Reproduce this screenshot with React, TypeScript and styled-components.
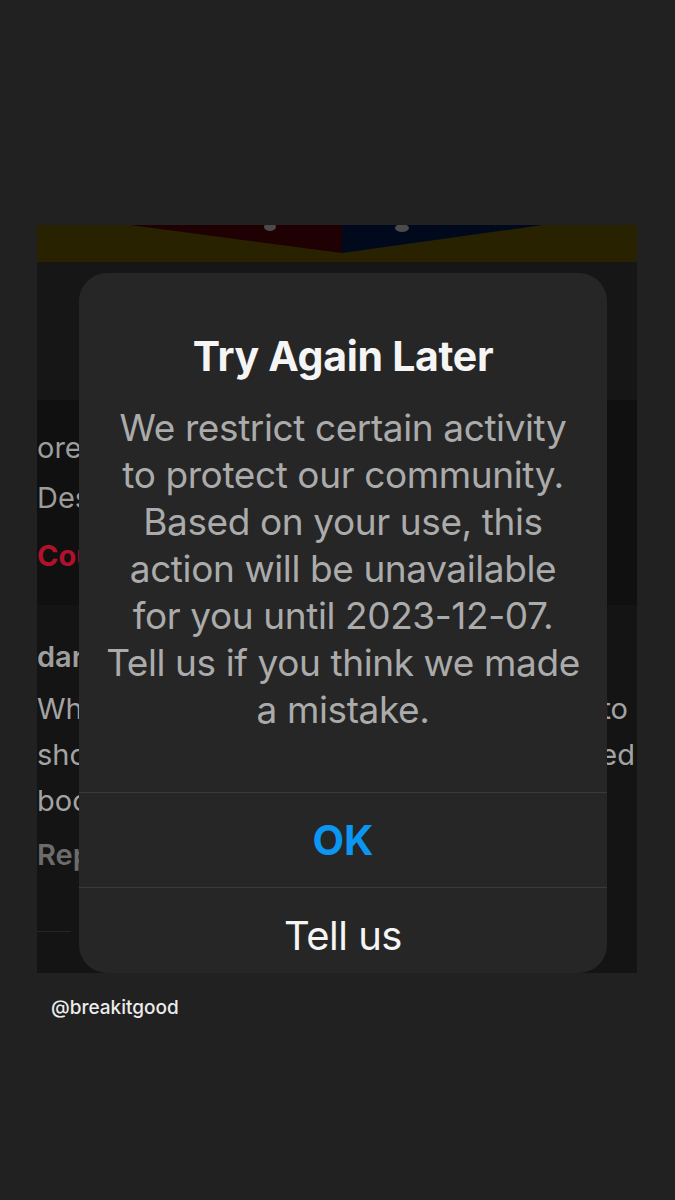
import React from 'react';
import styled, { createGlobalStyle } from 'styled-components';

const GlobalStyle = createGlobalStyle`
    html, body {
        margin: 0;
        padding: 0;
        background: #212121;
    }
    body {
        font-family: Inter, "Noto Sans", "Liberation Sans", sans-serif;
        -webkit-font-smoothing: antialiased;
    }
`;

const Page = styled.div`
    width: 675px;
    height: 1200px;
    padding: 225px 38px 0 37px;
    box-sizing: border-box;
    background: #212121;
`;

const Screen = styled.div`
    position: relative;
    width: 600px;
    height: 748px;
    overflow: hidden;
    background: #161616;
    display: flex;
    flex-direction: column;
`;

const Banner = styled.div`
    height: 37px;
    flex-shrink: 0;
    background: #292200;
`;

const HeaderGap = styled.div`
    height: 138px;
    flex-shrink: 0;
    background: #161616;
`;

const Section = styled.div<{ $bg: string; $height: number }>`
    height: ${p => p.$height}px;
    flex-shrink: 0;
    background: ${p => p.$bg};
    display: flex;
    flex-direction: column;
`;

const Line = styled.div<{ $color: string; $weight?: number; $top: number; $trail?: number }>`
    display: flex;
    justify-content: space-between;
    margin: ${p => p.$top}px ${p => 2 + (p.$trail || 0)}px 0 0;
    font-size: 29px;
    line-height: 32px;
    color: ${p => p.$color};
    font-weight: ${p => p.$weight || 400};
    white-space: nowrap;
`;

const Rule = styled.div`
    width: 34px;
    height: 1px;
    margin-top: 60px;
    background: #262626;
`;

const Dialog = styled.div`
    position: absolute;
    left: 42px;
    top: 48px;
    width: 528px;
    height: 700px;
    border-radius: 28px;
    background: #262626;
    display: flex;
    flex-direction: column;
`;

const Title = styled.div`
    margin-top: 59px;
    font-size: 41px;
    line-height: 49px;
    font-weight: 700;
    color: #f5f5f5;
    text-align: center;
    letter-spacing: -0.3px;
`;

const Message = styled.div`
    margin: 23px 24px 0;
    font-size: 37px;
    line-height: 47px;
    color: #ababab;
    text-align: center;
    letter-spacing: -0.4px;
`;

const Actions = styled.div`
    margin-top: 59px;
    display: flex;
    flex-direction: column;
`;

const ActionButton = styled.div<{ $primary?: boolean }>`
    height: 94px;
    display: flex;
    align-items: center;
    justify-content: center;
    border-top: 1px solid #3a3a3a;
    font-size: ${p => (p.$primary ? 41 : 40)}px;
    font-weight: ${p => (p.$primary ? 700 : 400)};
    letter-spacing: ${p => (p.$primary ? 0 : -0.5)}px;
    color: ${p => (p.$primary ? '#0b96f2' : '#f5f5f5')};
`;

const Handle = styled.div`
    margin: 22px 0 0 14px;
    font-size: 19px;
    line-height: 26px;
    font-weight: 500;
    color: #ececec;
`;

const FlagBanner = () => (
    <Banner>
        <svg width="600" height="37" viewBox="0 0 600 37">
            <polygon points="93,0 305,0 305,28" fill="#1f0003" />
            <polygon points="305,0 506,0 305,28" fill="#010a1c" />
            <ellipse cx="233" cy="2" rx="6" ry="4" fill="#4a4a4a" />
            <ellipse cx="365" cy="3" rx="7" ry="4" fill="#4a4a4a" />
        </svg>
    </Banner>
);

const App: React.FC = () => {
    return (<React.Fragment>
        <GlobalStyle />
        <Page>
            <Screen>
                <FlagBanner />
                <HeaderGap />
                <Section $bg="#101010" $height={205}>
                    <Line $color="#9c9c9c" $top={32}><span>ore</span></Line>
                    <Line $color="#9c9c9c" $top={18}><span>Des</span></Line>
                    <Line $color="#b3102c" $weight={700} $top={26}><span>Cou</span></Line>
                </Section>
                <Section $bg="#141414" $height={368}>
                    <Line $color="#9e9e9e" $weight={600} $top={36}><span>dar</span></Line>
                    <Line $color="#a3a3a3" $top={20} $trail={7}><span>Wh</span><span>to</span></Line>
                    <Line $color="#a3a3a3" $top={14}><span>sho</span><span>ed</span></Line>
                    <Line $color="#a3a3a3" $top={14}><span>boo</span></Line>
                    <Line $color="#6c6c6c" $weight={600} $top={22}><span>Rep</span></Line>
                    <Rule />
                </Section>
                <Dialog>
                    <Title>Try Again Later</Title>
                    <Message>
                        We restrict certain activity to protect our community. Based on your use, this action will be unavailable for you until 2023-12-07. Tell us if you think we made a mistake.
                    </Message>
                    <Actions>
                        <ActionButton $primary>OK</ActionButton>
                        <ActionButton>Tell us</ActionButton>
                    </Actions>
                </Dialog>
            </Screen>
            <Handle>@breakitgood</Handle>
        </Page>
    </React.Fragment>);
};

export default App;
